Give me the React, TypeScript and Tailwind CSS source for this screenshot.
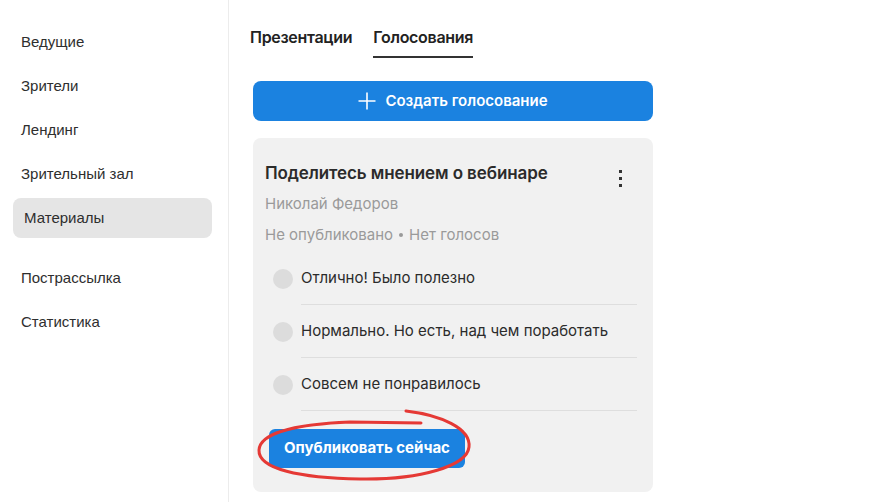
import React from "react";

const navTop = ["Ведущие", "Зрители", "Лендинг", "Зрительный зал"];
const navBottom = ["Пострассылка", "Статистика"];
const options = [
  "Отлично! Было полезно",
  "Нормально. Но есть, над чем поработать",
  "Совсем не понравилось",
];

export default function App() {
  return (
    <div
      className="relative flex w-[879px] h-[502px] bg-white text-[#2b2b2b] overflow-hidden"
      style={{ fontFamily: "Inter, 'Liberation Sans', sans-serif" }}
    >
      <aside className="w-[229px] shrink-0 border-r border-[#ececec] pt-5 px-[13px] text-[15px] text-[#2e2e2e]" style={{ fontFamily: "'Liberation Sans', Arial, sans-serif" }}>
        {navTop.map((t) => (
          <div key={t} className="h-11 flex items-center pl-2">{t}</div>
        ))}
        <div className="mt-[2px] h-10 flex items-center pl-[11px] rounded-lg bg-[#e5e5e5] w-[199px]">Материалы</div>
        <div className="mt-[18px]">
          {navBottom.map((t) => (
            <div key={t} className="h-11 flex items-center pl-2">{t}</div>
          ))}
        </div>
      </aside>

      <main className="flex-1 pl-[21px]">
        <div className="flex gap-[21px] pt-[26px] text-[16px] font-semibold tracking-[-0.3px] text-[#222]">
          <div className="pb-[10px] leading-[22px]">Презентации</div>
          <div className="pb-2 leading-[22px] border-b-2 border-[#333]">Голосования</div>
        </div>

        <div className="ml-[3px] w-[400px]">
          <button className="mt-[23px] w-full h-10 rounded-lg bg-[#1b82e0] text-white flex items-center justify-center gap-[9px] text-[15px] font-semibold">
            <svg width="18" height="18" viewBox="0 0 18 18" fill="none" stroke="white" strokeWidth="1.6">
              <path d="M9 0.5V17.5M0.5 9H17.5" />
            </svg>
            <span>Создать голосование</span>
          </button>

          <div className="mt-[17px] h-[354px] rounded-lg bg-[#f1f1f1] pl-3 pr-4 pt-[23px]">
            <div className="flex items-start justify-between">
              <div className="text-[17px] font-semibold leading-[24px] tracking-[-0.1px] text-[#2b2b2b]">Поделитесь мнением о вебинаре</div>
              <div className="flex flex-col items-center gap-[4px] pt-[9px] pr-[15px]">
                <span className="w-[3px] h-[3px] bg-[#333]" />
                <span className="w-[3px] h-[3px] bg-[#333]" />
                <span className="w-[3px] h-[3px] bg-[#333]" />
              </div>
            </div>
            <div className="mt-[6px] text-[15px] leading-[22px] text-[#9a9a9a]">Николай Федоров</div>
            <div className="mt-[9px] text-[15px] leading-[22px] text-[#9a9a9a] flex items-center gap-[6px]">
              <span>Не опубликовано</span>
              <span className="w-[4px] h-[4px] rounded-full bg-[#9a9a9a]" />
              <span>Нет голосов</span>
            </div>
            <div className="mt-[6px] pl-2">
              {options.map((o) => (
                <div key={o} className="flex items-center h-[53px]">
                  <span className="w-5 h-5 rounded-full bg-[#dcdcdc] shrink-0" />
                  <div className="ml-2 flex-1 h-full flex items-center border-b border-[#dedede] text-[15px] text-[#2b2b2b]">{o}</div>
                </div>
              ))}
            </div>
            <button className="mt-[18px] ml-1 w-[196px] h-[39px] rounded-md bg-[#1b82e0] text-white text-[15px] font-bold">
              Опубликовать сейчас
            </button>
          </div>
        </div>
      </main>

      <svg className="absolute left-0 top-0 pointer-events-none" width="879" height="502" viewBox="0 0 879 502" fill="none">
        <path
          d="M406 411 C440 415 471 428 469 447 C467 466 420 480 360 479 C300 478 258 469 259 450 C260 432 300 424 350 422 L421 423"
          stroke="#e53935"
          strokeWidth="3"
          strokeLinecap="round"
        />
      </svg>
    </div>
  );
}
